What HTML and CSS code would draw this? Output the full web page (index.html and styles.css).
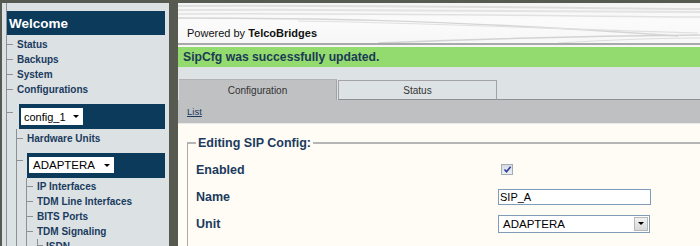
FILE: index.html
```html
<!DOCTYPE html>
<html>
<head>
<meta charset="utf-8">
<link rel="stylesheet" href="styles.css">
</head>
<body>
<div class="page">
  <aside class="sidebar">
    <div class="tree">
      <div class="welcome">Welcome</div>
      <div class="item">Status</div>
      <div class="item">Backups</div>
      <div class="item">System</div>
      <div class="item">Configurations</div>
      <div class="boxrow lvl1">
        <div class="navbox">
          <div class="pick pick-config">config_1<span class="tri"></span></div>
        </div>
      </div>
      <div class="sub">
        <div class="item">Hardware Units</div>
        <div class="boxrow">
          <div class="navbox">
            <div class="pick pick-unit">ADAPTERA<span class="tri"></span></div>
          </div>
        </div>
        <div class="sub sub3">
          <div class="item">IP Interfaces</div>
          <div class="item">TDM Line Interfaces</div>
          <div class="item">BITS Ports</div>
          <div class="item">TDM Signaling</div>
          <div class="sub4">
            <div class="item last">ISDN</div>
          </div>
        </div>
      </div>
    </div>
  </aside>
  <main class="main">
    <header class="header">
      <svg class="swoosh" width="522" height="40" viewBox="0 0 522 40">
        <path d="M0 3 C150 2 300 4 522 6" stroke="#dedede" stroke-width="2" fill="none"/>
        <path d="M0 7 C160 6 300 8 522 9" stroke="#e3e3e3" stroke-width="2" fill="none"/>
        <path d="M0 11 C150 10 300 12 522 14" stroke="#e1e1e1" stroke-width="1.5" fill="none"/>
        <path d="M0 15 C120 15 260 16 500 33" stroke="#d5d5d5" stroke-width="1.5" fill="none"/>
        <path d="M120 18 C250 20 380 26 520 30" stroke="#e0e0e0" stroke-width="1.2" fill="none"/>
        <path d="M200 40 C300 36 420 33 522 32" stroke="#d3d3d3" stroke-width="1.5" fill="none"/>
        <path d="M380 40 C430 37 480 35 522 35" stroke="#dedede" stroke-width="1" fill="none"/>
      </svg>
      <span class="powered">Powered by <b>TelcoBridges</b></span>
    </header>
    <div class="notice">SipCfg was successfully updated.</div>
    <div class="tabs">
      <div class="tab active">Configuration</div>
      <div class="tab">Status</div>
      <div class="tabfill"></div>
    </div>
    <div class="band"><a class="link" href="#">List</a></div>
    <div class="content">
      <fieldset class="editbox">
        <legend>Editing SIP Config:</legend>
        <div class="row">
          <span class="label">Enabled</span>
          <span class="check">
            <svg width="9" height="9" viewBox="0 0 9 9"><path d="M1.5 4.5 L3.5 6.8 L7.6 1.8" stroke="#2a3f9c" stroke-width="1.6" fill="none"/></svg>
          </span>
        </div>
        <div class="row">
          <span class="label">Name</span>
          <span class="textin">SIP_A</span>
        </div>
        <div class="row">
          <span class="label">Unit</span>
          <span class="selin">ADAPTERA<span class="dropbtn"><span class="tri"></span></span></span>
        </div>
      </fieldset>
    </div>
  </main>
</div>
</body>
</html>
```
FILE: styles.css
```css
html, body {
  margin: 0;
  padding: 0;
}
body {
  width: 700px;
  height: 246px;
  overflow: hidden;
  background: #565a51;
  font-family: "Liberation Sans", Arial, sans-serif;
}
.page {
  display: flex;
  height: 246px;
  box-sizing: border-box;
  padding: 3px 0 0 2px;
}
.sidebar {
  width: 167px;
  flex: none;
  background: #dce1e4;
  overflow: hidden;
}
.tree {
  margin-left: 4px;
  border-left: 1px solid #8e9194;
  height: 100%;
  padding-top: 8px;
  box-sizing: border-box;
}
.welcome {
  height: 24px;
  line-height: 25px;
  margin: 0 4px 2px 0;
  padding-left: 2px;
  background: #0c3a5a;
  color: #fff;
  font-weight: bold;
  font-size: 13.5px;
}
.item {
  display: flex;
  align-items: center;
  height: 15px;
  font-weight: bold;
  font-size: 10px;
  color: #1a3b5e;
  white-space: nowrap;
}
.item::before {
  content: "";
  flex: none;
  width: 6px;
  height: 1px;
  margin-right: 4px;
  background: #8e9194;
}
.item.last::before {
  align-self: flex-start;
  width: 5px;
  height: 6px;
  background: none;
  border-left: 1px solid #8e9194;
  border-bottom: 1px solid #8e9194;
  margin-right: 3px;
}
.boxrow {
  display: flex;
  align-items: flex-start;
  margin-top: 7px;
}
.boxrow::before {
  content: "";
  flex: none;
  width: 6px;
  height: 1px;
  margin: 7px 4px 0 0;
  background: #8e9194;
}
.boxrow.lvl1::before {
  margin: 8px 6px 0 0;
}
.navbox {
  flex: 1;
  height: 25px;
  margin-right: 4px;
  background: #0c3a5a;
  box-sizing: border-box;
  padding: 4px 2px;
}
.pick {
  display: flex;
  align-items: center;
  justify-content: space-between;
  height: 17px;
  background: #fff;
  color: #000;
  font-size: 11px;
  box-sizing: border-box;
  padding: 0 4px 0 3px;
}
.pick-config { width: 62px; }
.pick-unit { width: 85px; font-size: 11.5px; height: 16px; padding-left: 4px; }
.tri {
  width: 0;
  height: 0;
  border-left: 3px solid transparent;
  border-right: 3px solid transparent;
  border-top: 3px solid #000;
}
.sub {
  margin-left: 9px;
  border-left: 1px solid #8e9194;
  padding-top: 2px;
}
.sub3 {
  padding-top: 1px;
}
.sub4 {
  margin-left: 10px;
}
.main {
  flex: 1;
  margin-left: 9px;
  display: flex;
  flex-direction: column;
  background: #dde2e5;
  overflow: hidden;
}
.header {
  position: relative;
  height: 42px;
  flex: none;
  display: flex;
  align-items: flex-end;
  padding: 0 0 4px 9px;
  box-sizing: border-box;
  background: linear-gradient(#f4f4f4, #fbfbfb 45%, #f7f7f7);
  border-bottom: 2px solid #a9a9a9;
}
.swoosh {
  position: absolute;
  left: 0;
  top: 0;
}
.powered {
  position: relative;
  font-size: 11px;
  color: #111;
}
.notice {
  height: 20px;
  line-height: 21px;
  border-top: 2px solid #f6f6f6;
  background: #93db6f;
  color: #1b3a55;
  font-weight: bold;
  font-size: 12.2px;
  padding-left: 5px;
}
.tabs {
  display: flex;
  align-items: flex-end;
  height: 33px;
  flex: none;
}
.tab {
  box-sizing: border-box;
  text-align: center;
  font-size: 10px;
  color: #333;
}
.tab.active {
  width: 158px;
  height: 21px;
  line-height: 21px;
  margin-left: 1px;
  background: #c0c1c3;
  border-top: 1px solid #b3b3b3;
  border-right: 1px solid #a3a3a3;
}
.tab:not(.active) {
  width: 159px;
  height: 20px;
  line-height: 19px;
  margin-left: 1px;
  background: #dde2e5;
  border: 1px solid #a3a3a3;
  border-bottom-color: #8f8f8f;
}
.tabfill {
  flex: 1;
  border-bottom: 1px solid #8f8f8f;
}
.band {
  height: 23px;
  flex: none;
  background: #bfc0c2;
  display: flex;
  align-items: center;
  padding-left: 9px;
  border-bottom: 1px solid #e9e9e9;
}
.link {
  font-size: 9.5px;
  color: #1b3a5e;
  text-decoration: underline;
}
.content {
  flex: 1;
  background: #fefcf4;
}
.editbox {
  margin: 12px 0 0 9px;
  width: 560px;
  border: 1px solid #a9a9a9;
  border-top-width: 2px;
  border-top-color: #b5b5b5;
  padding: 6px 0 0 8px;
  box-sizing: border-box;
  height: 200px;
}
.editbox legend {
  padding: 0 2px;
  font-weight: bold;
  font-size: 12.5px;
  line-height: 14px;
  color: #1b3a5e;
}
.row {
  display: flex;
  align-items: center;
  height: 27px;
}
.label {
  width: 302px;
  flex: none;
  font-weight: bold;
  font-size: 12.5px;
  color: #1b3a5e;
}
.check {
  width: 12px;
  height: 11px;
  margin-left: 3px;
  box-sizing: border-box;
  border: 1px solid #a4acb8;
  background: linear-gradient(#d6dbe2, #eef0f3);
  display: flex;
  align-items: center;
  justify-content: center;
}
.textin {
  width: 153px;
  height: 16px;
  box-sizing: border-box;
  border: 1px solid #7f9db9;
  background: #fff;
  font-size: 11px;
  line-height: 14px;
  padding-left: 1px;
  color: #000;
}
.selin {
  position: relative;
  width: 152px;
  height: 18px;
  box-sizing: border-box;
  border: 1px solid #7f9db9;
  background: #fff;
  font-size: 11.5px;
  line-height: 16px;
  padding-left: 4px;
  color: #000;
  display: flex;
  justify-content: space-between;
  align-items: center;
}
.dropbtn {
  width: 14px;
  height: 14px;
  margin-right: 1px;
  box-sizing: border-box;
  border: 1px solid #b8b8b8;
  background: linear-gradient(#f2f2f2, #d9d9d9);
  display: flex;
  align-items: center;
  justify-content: center;
}
```
